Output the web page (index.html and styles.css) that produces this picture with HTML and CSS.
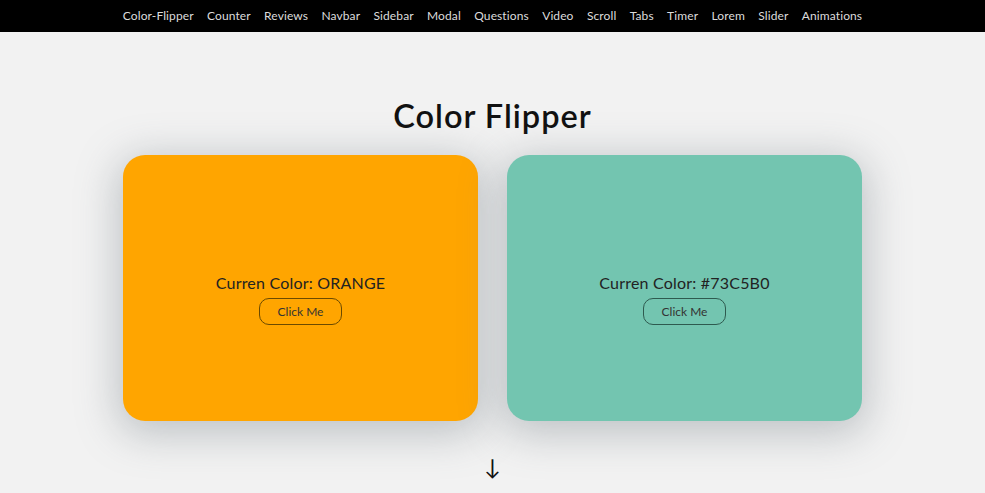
FILE: index.html
```html
<!DOCTYPE html>
<html>
<head>
<meta charset="utf-8">
<link rel="stylesheet" href="styles.css">
</head>
<body>
<nav class="nav">
  <a>Color-Flipper</a><a>Counter</a><a>Reviews</a><a>Navbar</a><a>Sidebar</a><a>Modal</a><a>Questions</a><a>Video</a><a>Scroll</a><a>Tabs</a><a>Timer</a><a>Lorem</a><a>Slider</a><a>Animations</a>
</nav>
<main class="main">
  <h1 class="title">Color Flipper</h1>
  <div class="cards">
    <div class="card card-orange">
      <p class="label">Curren Color: ORANGE</p>
      <button class="btn btn-orange">Click Me</button>
    </div>
    <div class="card card-teal">
      <p class="label">Curren Color: #73C5B0</p>
      <button class="btn btn-teal">Click Me</button>
    </div>
  </div>
  <div class="arrow">↓</div>
</main>
</body>
</html>
```
FILE: styles.css
```css
* { box-sizing: border-box; }
html, body { margin: 0; padding: 0; }
body {
  background: #f2f2f2;
  font-family: Lato, "Open Sans", sans-serif;
  color: #111;
  height: 493px;
  overflow: hidden;
}
.nav {
  height: 32px;
  background: #000;
  display: flex;
  justify-content: center;
  align-items: center;
  gap: 13.4px;
  padding-bottom: 1px;
}
.nav a {
  color: #dcdcdc;
  font-size: 12px;
  letter-spacing: 0.1px;
}
.main {
  display: flex;
  flex-direction: column;
  align-items: center;
}
.title {
  margin: 64px 0 0;
  height: 59px;
  font-size: 32.5px;
  font-weight: 600;
  letter-spacing: 1px;
  line-height: 40px;
}
.cards {
  display: flex;
  gap: 29px;
}
.card {
  width: 355px;
  height: 266px;
  border-radius: 22px;
  display: flex;
  flex-direction: column;
  align-items: center;
  justify-content: center;
  box-shadow: 0 8px 40px 6px rgba(110, 120, 130, 0.38);
  padding-top: 21px;
}
.card-orange { background: #ffa500; }
.card-teal { background: #73c5b0; }
.label {
  margin: 0 0 6px;
  font-size: 16px;
  color: #222;
  letter-spacing: 0.2px;
}
.btn {
  width: 83px;
  height: 27px;
  border-radius: 10px;
  background: transparent;
  font-family: inherit;
  font-size: 12px;
  color: #333;
  padding: 0;
}
.btn-orange { border: 1px solid #6b4a00; }
.btn-teal { border: 1px solid #2e5a4f; }
.arrow {
  margin-top: 34px;
  font-size: 22px;
  line-height: 24px;
  color: #111;
}
```
